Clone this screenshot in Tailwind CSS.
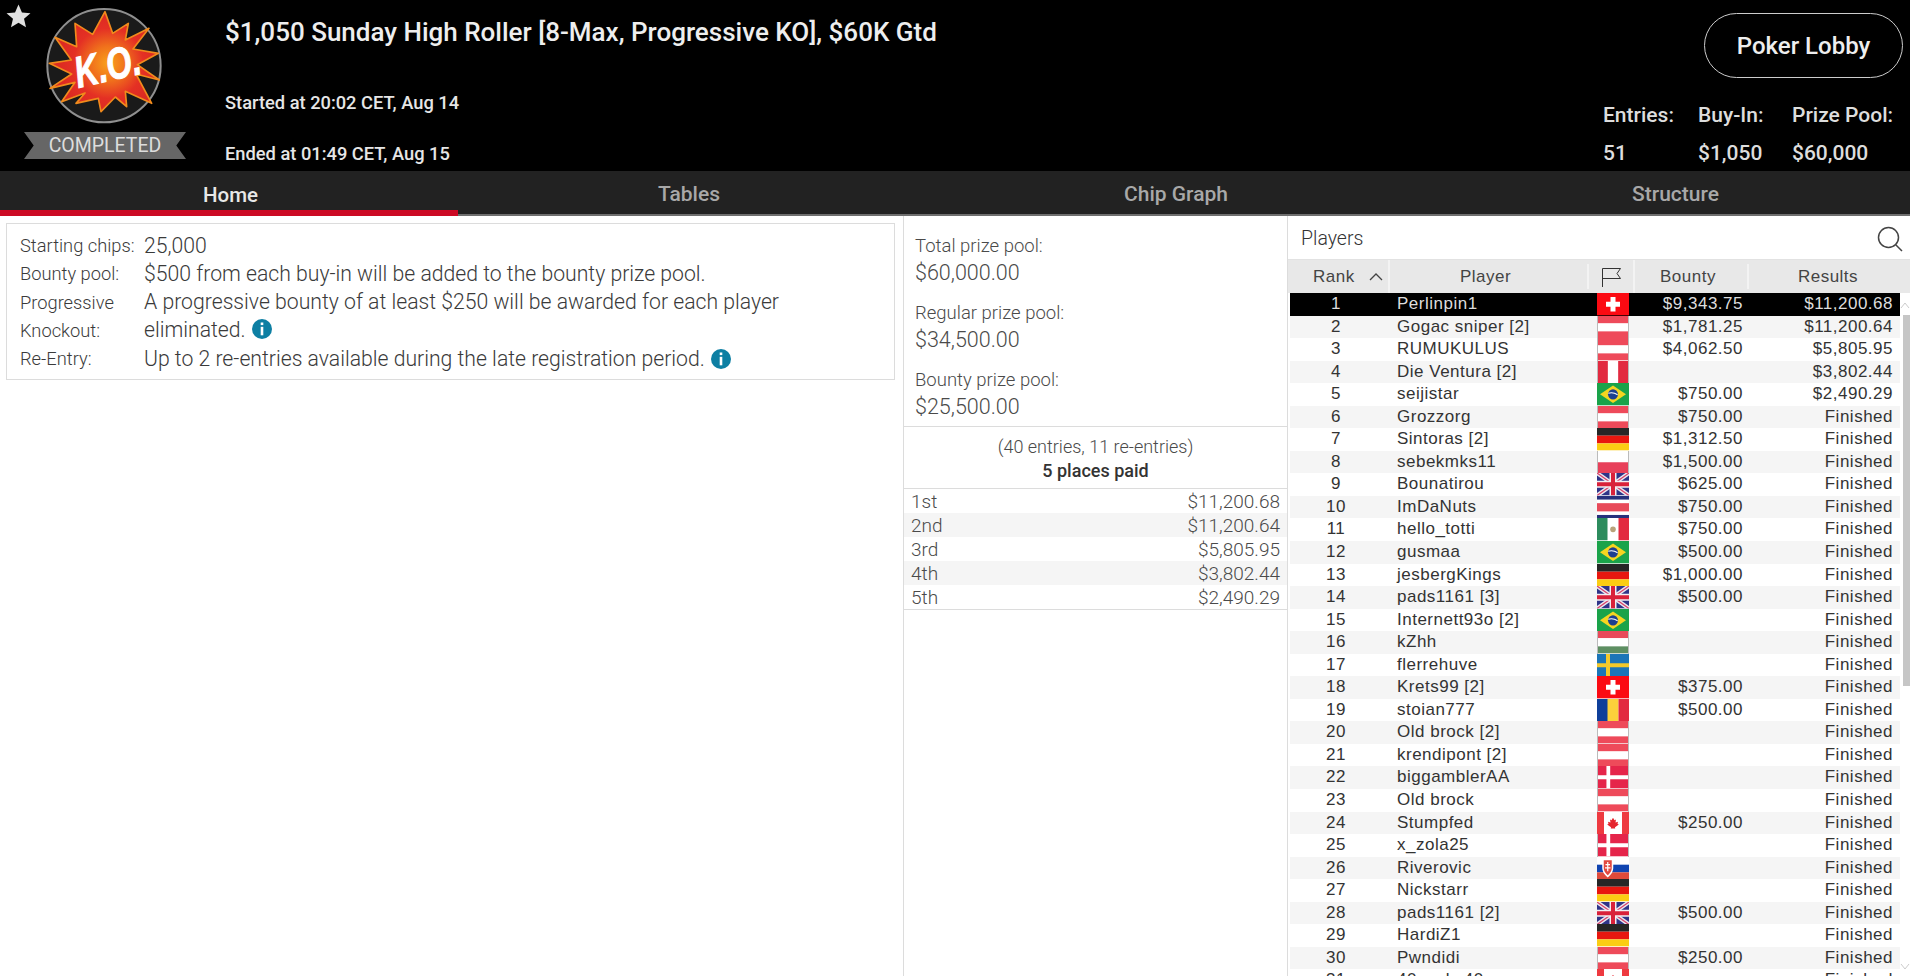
<!DOCTYPE html>
<html>
<head>
<meta charset="utf-8">
<script src="https://cdn.jsdelivr.net/npm/@tailwindcss/browser@4"></script>
</head>
<body class="bg-white">
<svg class="hidden">
<symbol id="ch" viewBox="0 0 32 22" preserveAspectRatio="none"><rect width="32" height="22" fill="#fb0a12"/><path d="M13.5 4h5v4.500H23v5h-4.500V18h-5v-4.500H9v-5h4.500z" fill="#fff"/></symbol>
<symbol id="at" viewBox="0 0 32 22" preserveAspectRatio="none"><rect width="32" height="22" fill="#ee4a5a"/><rect y="7" width="32" height="8" fill="#fff"/></symbol>
<symbol id="pe" viewBox="0 0 32 22" preserveAspectRatio="none"><rect width="32" height="22" fill="#e22a40"/><rect x="10.500" width="11" height="22" fill="#fff"/></symbol>
<symbol id="br" viewBox="0 0 32 22" preserveAspectRatio="none"><rect width="32" height="22" fill="#1aa34a"/><path d="M16 2.500 29 11 16 19.500 3 11z" fill="#f5d520"/><circle cx="16" cy="11" r="5" fill="#1d3f8f"/><path d="M11.300 10c3-.8 6.500-.3 9.300 1.500" stroke="#fff" fill="none"/></symbol>
<symbol id="de" viewBox="0 0 32 22" preserveAspectRatio="none"><rect width="32" height="7.500" fill="#262626"/><rect y="7.500" width="32" height="7.500" fill="#e8170f"/><rect y="15" width="32" height="7" fill="#fbcd13"/></symbol>
<symbol id="pl" viewBox="0 0 32 22" preserveAspectRatio="none"><rect width="32" height="11" fill="#fff"/><rect y="11" width="32" height="11" fill="#e8405a"/></symbol>
<symbol id="gb" viewBox="0 0 32 22" preserveAspectRatio="none"><rect width="32" height="22" fill="#2f3488"/><path d="M0 0 32 22M32 0 0 22" stroke="#e8e8f0" stroke-width="4"/><path d="M0 0 32 22M32 0 0 22" stroke="#d9416a" stroke-width="1.200"/><path d="M16 0v22M0 11h32" stroke="#f2eef2" stroke-width="7"/><path d="M16 0v22M0 11h32" stroke="#d9213a" stroke-width="4"/></symbol>
<symbol id="cr" viewBox="0 0 32 22" preserveAspectRatio="none"><rect width="32" height="22" fill="#27307c"/><rect y="3.500" width="32" height="15" fill="#fff"/><rect y="7" width="32" height="8" fill="#e84a5a"/></symbol>
<symbol id="mx" viewBox="0 0 32 22" preserveAspectRatio="none"><rect width="32" height="22" fill="#fff"/><rect width="10.500" height="22" fill="#2d8c5e"/><rect x="21.500" width="10.500" height="22" fill="#e22a40"/><circle cx="16" cy="11" r="2.800" fill="#b9a27a"/></symbol>
<symbol id="hu" viewBox="0 0 32 22" preserveAspectRatio="none"><rect width="32" height="7" fill="#e84a5a"/><rect y="7" width="32" height="8" fill="#fff"/><rect y="15" width="32" height="7" fill="#5e8f62"/></symbol>
<symbol id="se" viewBox="0 0 32 22" preserveAspectRatio="none"><rect width="32" height="22" fill="#1c75b8"/><path d="M11 0v22M0 11h32" stroke="#f4c92a" stroke-width="4"/></symbol>
<symbol id="ro" viewBox="0 0 32 22" preserveAspectRatio="none"><rect width="11" height="22" fill="#0e3f9a"/><rect x="10.500" width="11" height="22" fill="#fcd13b"/><rect x="21.500" width="10.500" height="22" fill="#e22a40"/></symbol>
<symbol id="dk" viewBox="0 0 32 22" preserveAspectRatio="none"><rect width="32" height="22" fill="#e5254a"/><path d="M11 0v22M0 11h32" stroke="#fff" stroke-width="4"/></symbol>
<symbol id="ca" viewBox="0 0 32 22" preserveAspectRatio="none"><rect width="32" height="22" fill="#ee3a40"/><rect x="7" width="18" height="22" fill="#fff"/><path d="m16 5.500 1.500 2.500 1.500-.7-.5 3 2.500-.8-.5 2 1.300.8-3.800 2.500.2 1.200h-4.400l.2-1.200-3.800-2.500 1.300-.8-.5-2 2.500.8-.5-3 1.500.7z" fill="#e5252e"/></symbol>
<symbol id="sk" viewBox="0 0 32 22" preserveAspectRatio="none"><rect width="32" height="7.500" fill="#fff"/><rect y="7.500" width="32" height="7.500" fill="#1044b0"/><rect y="15" width="32" height="7" fill="#de4a3a"/><path d="M6 2.500h9.500V11c0 4-3 6.500-4.750 8C9 17.500 6 15 6 11z" fill="#e24a40" stroke="#fff" stroke-width="1.500"/><path d="M10.750 5v9M8.500 7.500h4.500M8 10.500h5.500" stroke="#fff" stroke-width="1.200"/></symbol>
</svg>

<div class="w-[1910px] h-[976px] overflow-hidden flex flex-col font-['Roboto',sans-serif]">

  <header class="h-[171px] shrink-0 bg-black flex relative">
    <svg class="absolute left-[6px] top-[4px] w-[25px] h-[25px]" viewBox="0 0 24 24"><path d="M12 .500l3.300 7.600 8.200.7-6.200 5.400 1.900 8.100L12 18.100l-7.200 4.200 1.900-8.100L.500 8.800l8.200-.7z" fill="#e0e0e0"/></svg>
    <div class="w-[225px] shrink-0 flex flex-col">
      <svg class="ml-[46px] mt-[7px] w-[116px] h-[117px]" viewBox="138 21 348 351">
        <defs>
          <radialGradient id="burst" gradientUnits="userSpaceOnUse" cx="325" cy="190" r="150">
            <stop offset="0" stop-color="#f9a21a"/><stop offset=".35" stop-color="#f0701c"/><stop offset=".7" stop-color="#e43024"/><stop offset="1" stop-color="#dc2a22"/>
          </radialGradient>
        </defs>
        <circle cx="312" cy="197" r="170" fill="#1a1a1a" stroke="#8f8f8f" stroke-width="6"/>
        <polygon points="315,35 338,100 385,70 376,120 447,85 399,147 475,160 412,194 478,240 408,222 455,310 376,274 380,320 346,291 303,335 295,295 228,310 255,279 185,305 225,247 150,265 215,222 148,190 214,180 165,112 230,140 225,70 278,103" fill="url(#burst)" stroke="#f08a1c" stroke-width="5" stroke-linejoin="round"/>
        <text x="322" y="243" text-anchor="middle" transform="rotate(-13 322 198)" fill="#fff" stroke="#fff" stroke-width="3" font-family="'Liberation Sans',sans-serif" font-weight="700" font-style="italic" font-size="132" textLength="200" lengthAdjust="spacingAndGlyphs">K.O.</text>
      </svg>
      <div class="ml-[24px] mt-[8px] w-[162px] h-[27px] bg-[#666] [clip-path:polygon(0_0,100%_0,94%_50%,100%_100%,0_100%,6%_50%)] flex items-center justify-center pt-[1px] text-[19.500px] text-[#ddd] leading-none">COMPLETED</div>
    </div>
    <div class="flex-1 flex flex-col text-[#e6e6e6]">
      <div class="mt-[17px] h-[30px] leading-[30px] text-[26px] font-medium text-[#eee]">$1,050 Sunday High Roller [8-Max, Progressive KO], $60K Gtd</div>
      <div class="mt-[44px] h-[24px] leading-[24px] text-[18.300px] font-medium">Started at 20:02 CET, Aug 14</div>
      <div class="mt-[27px] h-[24px] leading-[24px] text-[18.300px] font-medium">Ended at 01:49 CET, Aug 15</div>
    </div>
    <div class="w-[307px] shrink-0 flex flex-col text-[#ddd] font-medium">
      <div class="self-end mr-[7px] mt-[13px] w-[199px] h-[65px] border-[1.5px] border-[#ccc] rounded-full flex items-center justify-center text-[24px] text-[#eee]">Poker Lobby</div>
      <div class="mt-[25px] h-[24px] leading-[24px] grid grid-cols-[95px_94px_1fr] text-[21px]"><span>Entries:</span><span>Buy-In:</span><span>Prize Pool:</span></div>
      <div class="mt-[14px] h-[24px] leading-[24px] grid grid-cols-[95px_94px_1fr] text-[21px]"><span>51</span><span>$1,050</span><span>$60,000</span></div>
    </div>
  </header>

  <nav class="h-[45px] shrink-0 bg-[#222] border-b-2 border-[#6f6f6f] grid grid-cols-[458px_462px_512px_1fr] text-[21px] font-medium text-[#a8a8a8]">
    <div class="h-[45px] border-b-[6px] border-[#cc0a24] text-[#e8e8e8] text-[20.500px] flex items-center justify-center pt-[9px] pl-[3px]">Home</div>
    <div class="flex items-center justify-center pt-[2px]">Tables</div>
    <div class="flex items-center justify-center pt-[2px]">Chip Graph</div>
    <div class="flex items-center justify-center pt-[2px] pl-[9px]">Structure</div>
  </nav>

  <main class="flex-1 flex min-h-0">
    <section class="w-[903px] shrink-0 pl-[6px] pr-[8px] pt-[7px]">
      <div class="h-[157px] border border-[#dcdcdc] pl-[13px] pt-[8px] font-light text-[#3a3a3a] grid grid-cols-[124px_1fr] auto-rows-min">
        <div class="text-[18.300px] leading-[28px] h-[28px] whitespace-nowrap">Starting chips:</div><div class="text-[21.200px] leading-[28px] h-[28px]">25,000</div>
        <div class="text-[18.300px] leading-[28px] h-[28px]">Bounty pool:</div><div class="text-[21.200px] leading-[28px] h-[28px]">$500 from each buy-in will be added to the bounty prize pool.</div>
        <div class="text-[18.300px] leading-[27.500px] h-[55px] pt-[1px]">Progressive<br>Knockout:</div>
        <div class="text-[21.200px] leading-[27.500px] h-[55px]">A progressive bounty of at least $250 will be awarded for each player<br><span class="inline-flex items-center gap-[6px]">eliminated.<svg class="w-[20px] h-[20px]" viewBox="0 0 20 20"><circle cx="10" cy="10" r="10" fill="#0d7fa3"/><rect x="8.700" y="3.500" width="2.600" height="2.600" fill="#fff"/><rect x="8.700" y="7.800" width="2.600" height="8.500" fill="#fff"/></svg></span></div>
        <div class="text-[18.300px] leading-[32px] h-[30px]">Re-Entry:</div>
        <div class="text-[21.200px] leading-[32px] h-[30px]"><span class="inline-flex items-center gap-[6px]">Up to 2 re-entries available during the late registration period.<svg class="w-[20px] h-[20px]" viewBox="0 0 20 20"><circle cx="10" cy="10" r="10" fill="#0d7fa3"/><rect x="8.700" y="3.500" width="2.600" height="2.600" fill="#fff"/><rect x="8.700" y="7.800" width="2.600" height="8.500" fill="#fff"/></svg></span></div>
      </div>
    </section>

    <section class="w-[385px] shrink-0 border-x border-[#dcdcdc] text-[#4a4a4a] font-light">
      <div class="h-[211px] pl-[11px] pt-[17px] border-b border-[#dcdcdc]">
        <div class="text-[18.500px] leading-[26px] h-[26px]">Total prize pool:</div>
        <div class="text-[21.500px] leading-[26px] h-[26px] pt-[1px]">$60,000.00</div>
        <div class="mt-[15px] text-[18.500px] leading-[26px] h-[26px]">Regular prize pool:</div>
        <div class="text-[21.500px] leading-[26px] h-[26px] pt-[1px]">$34,500.00</div>
        <div class="mt-[15px] text-[18.500px] leading-[26px] h-[26px]">Bounty prize pool:</div>
        <div class="text-[21.500px] leading-[26px] h-[26px] pt-[1px]">$25,500.00</div>
      </div>
      <div class="h-[62px] border-b border-[#dcdcdc] text-center pt-[8px]">
        <div class="text-[18px] leading-[24px]">(40 entries, 11 re-entries)</div>
        <div class="text-[18px] leading-[24px] font-medium text-[#333]">5 places paid</div>
      </div>
      <div class="border-b border-[#dcdcdc] text-[19px] leading-[25px]">
        <div class="flex justify-between pl-[7px] pr-[7px] h-[24px]"><span>1st</span><span>$11,200.68</span></div>
        <div class="flex justify-between pl-[7px] pr-[7px] h-[24px] bg-[#f5f5f5]"><span>2nd</span><span>$11,200.64</span></div>
        <div class="flex justify-between pl-[7px] pr-[7px] h-[24px]"><span>3rd</span><span>$5,805.95</span></div>
        <div class="flex justify-between pl-[7px] pr-[7px] h-[24px] bg-[#f5f5f5]"><span>4th</span><span>$3,802.44</span></div>
        <div class="flex justify-between pl-[7px] pr-[7px] h-[24px]"><span>5th</span><span>$2,490.29</span></div>
      </div>
    </section>

    <section class="flex-1 min-w-0 relative text-[#333]">
      <div class="h-[44px] border-b border-[#e2e2e2] flex items-center justify-between pl-[13px] pr-[7px] pt-[2px]">
        <span class="text-[19.500px] font-light text-[#333]">Players</span>
        <svg class="w-[26px] h-[26px]" viewBox="0 0 26 26" fill="none" stroke="#444" stroke-width="1.500"><circle cx="11.500" cy="11.500" r="10"/><path d="M18.500 18.500l6.500 6.500"/></svg>
      </div>
      <div class="h-[33px] bg-[#e8e8e8] grid grid-cols-[102px_199px_46px_114px_1fr] items-center text-[17px] tracking-[.5px] font-['Liberation_Sans',sans-serif] text-center text-[#444] divide-x-2 divide-[#f3f3f3]">
        <div class="flex items-center h-full pl-[25px] gap-[14px]"><span>Rank</span><svg class="w-[14px] h-[8px]" viewBox="0 0 14 8" fill="none" stroke="#444" stroke-width="1.300"><path d="M1 7l6-6 6 6"/></svg></div>
        <div class="pr-[6px]">Player</div>
        <div class="h-full flex items-center justify-center"><svg class="w-[21px] h-[20px]" viewBox="0 0 21 20" fill="none" stroke="#333" stroke-width="1"><path d="M1.500 20V1.500H19.500l-3.500 5 3.500 5H1.500"/></svg></div>
        <div class="pr-[6px]">Bounty</div>
        <div class="pr-[3px]">Results</div>
      </div>
      <div class="ml-[2px] w-[610px] text-[17px] tracking-[.5px] leading-[22.550px] font-['Liberation_Sans',sans-serif] text-[#333]">
        <div class="grid grid-cols-[92px_215px_32px_114px_150px] h-[22.550px] bg-black text-[#ddd]"><div class="text-center">1</div><div class="pl-[15px]">Perlinpin1</div><svg class="w-[32px] h-[22.550px]"><use href="#ch"/></svg><div class="text-right">$9,343.75</div><div class="text-right">$11,200.68</div></div>
        <div class="grid grid-cols-[92px_215px_32px_114px_150px] h-[22.550px] bg-[#f5f5f5]"><div class="text-center">2</div><div class="pl-[15px]">Gogac sniper [2]</div><svg class="w-[32px] h-[22.550px] border-x border-[#bbb]"><use href="#at"/></svg><div class="text-right">$1,781.25</div><div class="text-right">$11,200.64</div></div>
        <div class="grid grid-cols-[92px_215px_32px_114px_150px] h-[22.550px]"><div class="text-center">3</div><div class="pl-[15px]">RUMUKULUS</div><svg class="w-[32px] h-[22.550px] border-x border-[#bbb]"><use href="#at"/></svg><div class="text-right">$4,062.50</div><div class="text-right">$5,805.95</div></div>
        <div class="grid grid-cols-[92px_215px_32px_114px_150px] h-[22.550px] bg-[#f5f5f5]"><div class="text-center">4</div><div class="pl-[15px]">Die Ventura [2]</div><svg class="w-[32px] h-[22.550px] border-x border-[#bbb]"><use href="#pe"/></svg><div class="text-right"></div><div class="text-right">$3,802.44</div></div>
        <div class="grid grid-cols-[92px_215px_32px_114px_150px] h-[22.550px]"><div class="text-center">5</div><div class="pl-[15px]">seijistar</div><svg class="w-[32px] h-[22.550px]"><use href="#br"/></svg><div class="text-right">$750.00</div><div class="text-right">$2,490.29</div></div>
        <div class="grid grid-cols-[92px_215px_32px_114px_150px] h-[22.550px] bg-[#f5f5f5]"><div class="text-center">6</div><div class="pl-[15px]">Grozzorg</div><svg class="w-[32px] h-[22.550px] border-x border-[#bbb]"><use href="#at"/></svg><div class="text-right">$750.00</div><div class="text-right">Finished</div></div>
        <div class="grid grid-cols-[92px_215px_32px_114px_150px] h-[22.550px]"><div class="text-center">7</div><div class="pl-[15px]">Sintoras [2]</div><svg class="w-[32px] h-[22.550px]"><use href="#de"/></svg><div class="text-right">$1,312.50</div><div class="text-right">Finished</div></div>
        <div class="grid grid-cols-[92px_215px_32px_114px_150px] h-[22.550px] bg-[#f5f5f5]"><div class="text-center">8</div><div class="pl-[15px]">sebekmks11</div><svg class="w-[32px] h-[22.550px] border-x border-[#bbb]"><use href="#pl"/></svg><div class="text-right">$1,500.00</div><div class="text-right">Finished</div></div>
        <div class="grid grid-cols-[92px_215px_32px_114px_150px] h-[22.550px]"><div class="text-center">9</div><div class="pl-[15px]">Bounatirou</div><svg class="w-[32px] h-[22.550px]"><use href="#gb"/></svg><div class="text-right">$625.00</div><div class="text-right">Finished</div></div>
        <div class="grid grid-cols-[92px_215px_32px_114px_150px] h-[22.550px] bg-[#f5f5f5]"><div class="text-center">10</div><div class="pl-[15px]">ImDaNuts</div><svg class="w-[32px] h-[22.550px]"><use href="#cr"/></svg><div class="text-right">$750.00</div><div class="text-right">Finished</div></div>
        <div class="grid grid-cols-[92px_215px_32px_114px_150px] h-[22.550px]"><div class="text-center">11</div><div class="pl-[15px]">hello_totti</div><svg class="w-[32px] h-[22.550px]"><use href="#mx"/></svg><div class="text-right">$750.00</div><div class="text-right">Finished</div></div>
        <div class="grid grid-cols-[92px_215px_32px_114px_150px] h-[22.550px] bg-[#f5f5f5]"><div class="text-center">12</div><div class="pl-[15px]">gusmaa</div><svg class="w-[32px] h-[22.550px]"><use href="#br"/></svg><div class="text-right">$500.00</div><div class="text-right">Finished</div></div>
        <div class="grid grid-cols-[92px_215px_32px_114px_150px] h-[22.550px]"><div class="text-center">13</div><div class="pl-[15px]">jesbergKings</div><svg class="w-[32px] h-[22.550px]"><use href="#de"/></svg><div class="text-right">$1,000.00</div><div class="text-right">Finished</div></div>
        <div class="grid grid-cols-[92px_215px_32px_114px_150px] h-[22.550px] bg-[#f5f5f5]"><div class="text-center">14</div><div class="pl-[15px]">pads1161 [3]</div><svg class="w-[32px] h-[22.550px]"><use href="#gb"/></svg><div class="text-right">$500.00</div><div class="text-right">Finished</div></div>
        <div class="grid grid-cols-[92px_215px_32px_114px_150px] h-[22.550px]"><div class="text-center">15</div><div class="pl-[15px]">Internett93o [2]</div><svg class="w-[32px] h-[22.550px]"><use href="#br"/></svg><div class="text-right"></div><div class="text-right">Finished</div></div>
        <div class="grid grid-cols-[92px_215px_32px_114px_150px] h-[22.550px] bg-[#f5f5f5]"><div class="text-center">16</div><div class="pl-[15px]">kZhh</div><svg class="w-[32px] h-[22.550px] border-x border-[#bbb]"><use href="#hu"/></svg><div class="text-right"></div><div class="text-right">Finished</div></div>
        <div class="grid grid-cols-[92px_215px_32px_114px_150px] h-[22.550px]"><div class="text-center">17</div><div class="pl-[15px]">flerrehuve</div><svg class="w-[32px] h-[22.550px]"><use href="#se"/></svg><div class="text-right"></div><div class="text-right">Finished</div></div>
        <div class="grid grid-cols-[92px_215px_32px_114px_150px] h-[22.550px] bg-[#f5f5f5]"><div class="text-center">18</div><div class="pl-[15px]">Krets99 [2]</div><svg class="w-[32px] h-[22.550px]"><use href="#ch"/></svg><div class="text-right">$375.00</div><div class="text-right">Finished</div></div>
        <div class="grid grid-cols-[92px_215px_32px_114px_150px] h-[22.550px]"><div class="text-center">19</div><div class="pl-[15px]">stoian777</div><svg class="w-[32px] h-[22.550px]"><use href="#ro"/></svg><div class="text-right">$500.00</div><div class="text-right">Finished</div></div>
        <div class="grid grid-cols-[92px_215px_32px_114px_150px] h-[22.550px] bg-[#f5f5f5]"><div class="text-center">20</div><div class="pl-[15px]">Old brock [2]</div><svg class="w-[32px] h-[22.550px] border-x border-[#bbb]"><use href="#at"/></svg><div class="text-right"></div><div class="text-right">Finished</div></div>
        <div class="grid grid-cols-[92px_215px_32px_114px_150px] h-[22.550px]"><div class="text-center">21</div><div class="pl-[15px]">krendipont [2]</div><svg class="w-[32px] h-[22.550px] border-x border-[#bbb]"><use href="#at"/></svg><div class="text-right"></div><div class="text-right">Finished</div></div>
        <div class="grid grid-cols-[92px_215px_32px_114px_150px] h-[22.550px] bg-[#f5f5f5]"><div class="text-center">22</div><div class="pl-[15px]">biggamblerAA</div><svg class="w-[32px] h-[22.550px] border-x border-[#bbb]"><use href="#dk"/></svg><div class="text-right"></div><div class="text-right">Finished</div></div>
        <div class="grid grid-cols-[92px_215px_32px_114px_150px] h-[22.550px]"><div class="text-center">23</div><div class="pl-[15px]">Old brock</div><svg class="w-[32px] h-[22.550px] border-x border-[#bbb]"><use href="#at"/></svg><div class="text-right"></div><div class="text-right">Finished</div></div>
        <div class="grid grid-cols-[92px_215px_32px_114px_150px] h-[22.550px] bg-[#f5f5f5]"><div class="text-center">24</div><div class="pl-[15px]">Stumpfed</div><svg class="w-[32px] h-[22.550px]"><use href="#ca"/></svg><div class="text-right">$250.00</div><div class="text-right">Finished</div></div>
        <div class="grid grid-cols-[92px_215px_32px_114px_150px] h-[22.550px]"><div class="text-center">25</div><div class="pl-[15px]">x_zola25</div><svg class="w-[32px] h-[22.550px] border-x border-[#bbb]"><use href="#dk"/></svg><div class="text-right"></div><div class="text-right">Finished</div></div>
        <div class="grid grid-cols-[92px_215px_32px_114px_150px] h-[22.550px] bg-[#f5f5f5]"><div class="text-center">26</div><div class="pl-[15px]">Riverovic</div><svg class="w-[32px] h-[22.550px]"><use href="#sk"/></svg><div class="text-right"></div><div class="text-right">Finished</div></div>
        <div class="grid grid-cols-[92px_215px_32px_114px_150px] h-[22.550px]"><div class="text-center">27</div><div class="pl-[15px]">Nickstarr</div><svg class="w-[32px] h-[22.550px]"><use href="#de"/></svg><div class="text-right"></div><div class="text-right">Finished</div></div>
        <div class="grid grid-cols-[92px_215px_32px_114px_150px] h-[22.550px] bg-[#f5f5f5]"><div class="text-center">28</div><div class="pl-[15px]">pads1161 [2]</div><svg class="w-[32px] h-[22.550px]"><use href="#gb"/></svg><div class="text-right">$500.00</div><div class="text-right">Finished</div></div>
        <div class="grid grid-cols-[92px_215px_32px_114px_150px] h-[22.550px]"><div class="text-center">29</div><div class="pl-[15px]">HardiZ1</div><svg class="w-[32px] h-[22.550px]"><use href="#de"/></svg><div class="text-right"></div><div class="text-right">Finished</div></div>
        <div class="grid grid-cols-[92px_215px_32px_114px_150px] h-[22.550px] bg-[#f5f5f5]"><div class="text-center">30</div><div class="pl-[15px]">Pwndidi</div><svg class="w-[32px] h-[22.550px] border-x border-[#bbb]"><use href="#at"/></svg><div class="text-right">$250.00</div><div class="text-right">Finished</div></div>
        <div class="grid grid-cols-[92px_215px_32px_114px_150px] h-[22.550px]"><div class="text-center">31</div><div class="pl-[15px]">40zonks40</div><svg class="w-[32px] h-[22.550px]"><use href="#ca"/></svg><div class="text-right"></div><div class="text-right">Finished</div></div>
      </div>
      <div class="absolute right-0 top-[99px] w-[7px] h-[371px] bg-[#c6c6c6]"></div>
      <svg class="absolute right-0 top-[84px] w-[10px] h-[10px]" viewBox="0 0 10 10" fill="none" stroke="#ccc"><path d="M1 8l4-5 4 5"/></svg>
      <svg class="absolute right-0 top-[746px] w-[10px] h-[10px]" viewBox="0 0 10 10" fill="none" stroke="#ccc"><path d="M1 2l4 5 4-5"/></svg>
    </section>
  </main>
</div>
</body>
</html>
